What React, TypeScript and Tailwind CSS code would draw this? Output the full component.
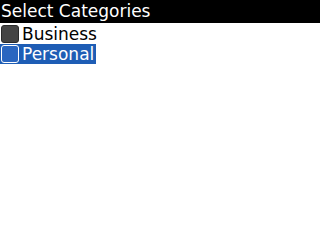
export default function App() {
  return (
    <div className="w-[320px] h-[240px] bg-white font-['DejaVu_Sans',sans-serif]">
      <div className="h-[23px] bg-black text-white text-[17px] leading-[23px] pl-[1px] whitespace-nowrap">
        Select Categories
      </div>
      <div className="flex flex-col pt-[1px]">
        <div className="flex items-center h-[20px]">
          <span className="ml-[1px] w-[18px] h-[18px] rounded-[3px] bg-[#444444] border border-[#2a2a2a]" />
          <span className="ml-[3px] text-[17px] leading-[20px] text-black">Business</span>
        </div>
        <div className="flex">
          <div className="flex items-center h-[20px] bg-[#1e5db5] pr-[2px]">
            <span className="ml-[1px] w-[18px] h-[18px] rounded-[3px] bg-[#2a66c0] border border-white" />
            <span className="ml-[3px] text-[17px] leading-[20px] text-white">Personal</span>
          </div>
        </div>
      </div>
    </div>
  );
}
